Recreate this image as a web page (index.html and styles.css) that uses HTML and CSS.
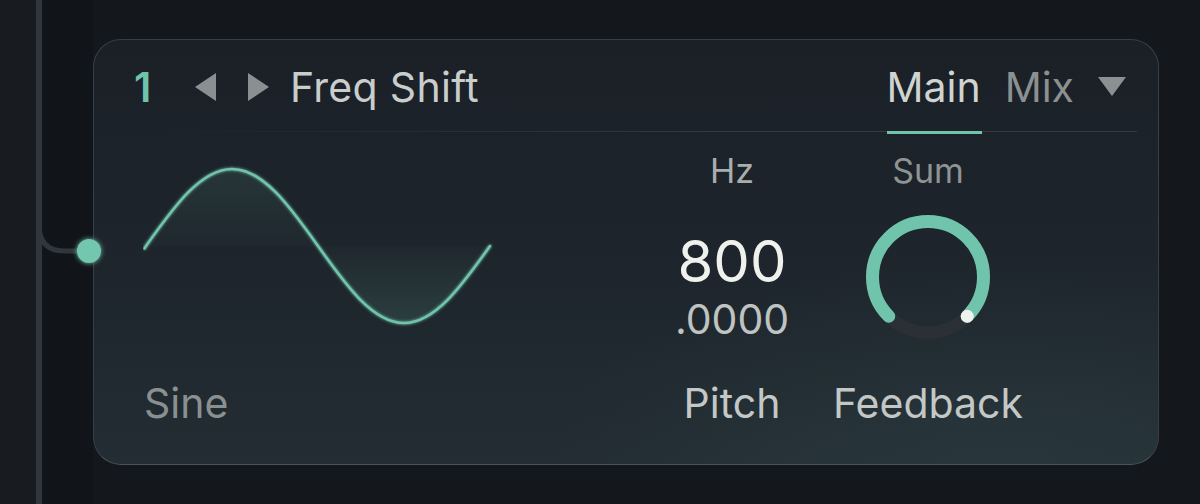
FILE: index.html
```html
<!DOCTYPE html>
<html lang="en">
<head>
<meta charset="utf-8">
<title>Freq Shift</title>
<link rel="stylesheet" href="styles.css">
</head>
<body>
<div class="page">
  <div class="rail">
    <svg class="rail-svg" width="93" height="504" viewBox="0 0 93 504">
      <defs>
        <filter id="glow" x="-100%" y="-100%" width="300%" height="300%">
          <feGaussianBlur stdDeviation="2.5" result="b"/>
          <feMerge><feMergeNode in="b"/><feMergeNode in="SourceGraphic"/></feMerge>
        </filter>
      </defs>
      <line x1="39" y1="0" x2="39" y2="504" stroke="#30363c" stroke-width="6"/>
      <path d="M39 224 Q39 251 64 251 L88 251" fill="none" stroke="#30363c" stroke-width="5"/>
      <circle cx="89" cy="251" r="12" fill="#72c7ae" filter="url(#glow)"/>
    </svg>
  </div>

  <div class="card">
    <div class="header">
      <div class="h-left">
        <span class="slot-num">1</span>
        <svg class="arrow arrow-prev" width="21" height="28" viewBox="0 0 21 28"><polygon points="21,0 21,28 0,14" fill="#8a8f91"/></svg>
        <svg class="arrow arrow-next" width="21" height="28" viewBox="0 0 21 28"><polygon points="0,0 0,28 21,14" fill="#8a8f91"/></svg>
        <span class="title">Freq Shift</span>
      </div>
      <div class="tabs">
        <span class="tab tab-active">Main</span>
        <span class="tab">Mix</span>
        <svg class="dropdown" width="28" height="19" viewBox="0 0 28 19"><polygon points="0,0 28,0 14,19" fill="#8b9092"/></svg>
      </div>
    </div>

    <div class="body">
      <div class="col wave-col">
        <svg class="wave" width="350" height="170" viewBox="0 0 350 170">
          <defs>
            <linearGradient id="fillTop" x1="0" y1="0" x2="0" y2="1">
              <stop offset="0" stop-color="#6fc4ab" stop-opacity="0.12"/>
              <stop offset="1" stop-color="#6fc4ab" stop-opacity="0.02"/>
            </linearGradient>
            <linearGradient id="fillBot" x1="0" y1="1" x2="0" y2="0">
              <stop offset="0" stop-color="#6fc4ab" stop-opacity="0.14"/>
              <stop offset="1" stop-color="#6fc4ab" stop-opacity="0.02"/>
            </linearGradient>
            <filter id="wglow" x="-10%" y="-10%" width="120%" height="120%">
              <feGaussianBlur stdDeviation="1.5" result="b"/>
              <feMerge><feMergeNode in="b"/><feMergeNode in="SourceGraphic"/></feMerge>
            </filter>
          </defs>
          <path d="M3 86 C31.06 46.54 57.96 9 89 9 C120.04 9 146.94 46.54 175 86 Z" fill="url(#fillTop)"/>
          <path d="M175 86 C203.06 125.46 229.96 163 261 163 C292.04 163 318.94 125.46 347 86 Z" fill="url(#fillBot)"/>
          <path d="M1.5 88.5 L3 86 C31.06 46.54 57.96 9 89 9 C120.04 9 146.94 46.54 175 86 C203.06 125.46 229.96 163 261 163 C292.04 163 318.94 125.46 347 86" fill="none" stroke="#6fc4ab" stroke-width="2.6" stroke-linecap="round" filter="url(#wglow)"/>
        </svg>
        <span class="name name-dim">Sine</span>
      </div>

      <div class="col pitch-col">
        <span class="unit">Hz</span>
        <div class="value">
          <span class="value-int">800</span>
          <span class="value-frac">.0000</span>
        </div>
        <span class="name">Pitch</span>
      </div>

      <div class="col fb-col">
        <span class="unit unit-dim">Sum</span>
        <svg class="knob" width="140" height="140" viewBox="0 0 140 140">
          <circle cx="70" cy="70" r="55.5" fill="none" stroke="#2a3035" stroke-width="13"/>
          <path d="M30.76 109.24 A55.5 55.5 0 1 1 109.24 109.24" fill="none" stroke="#6fc4ab" stroke-width="13" stroke-linecap="round"/>
          <circle cx="109.24" cy="109.24" r="6.5" fill="#eef1ec"/>
        </svg>
        <span class="name">Feedback</span>
      </div>
    </div>
  </div>
</div>
</body>
</html>
```

FILE: styles.css
```css
* { box-sizing: border-box; }

html, body {
  margin: 0;
  padding: 0;
  background: #14181d;
  font-family: Inter, "Noto Sans", "Liberation Sans", sans-serif;
}

.page {
  display: flex;
  width: 1200px;
  height: 504px;
  overflow: hidden;
  background: #14181d;
}

.rail {
  flex: none;
  width: 93px;
  height: 504px;
  z-index: 2;
  background: linear-gradient(to right, #181c21 0, #181c21 36px, #111418 36px, #111418 100%);
}

.rail-svg {
  display: block;
  overflow: visible;
}

.card {
  flex: none;
  width: 1066px;
  height: 426px;
  margin-top: 39px;
  border-radius: 28px;
  border: 1px solid #373f46;
  border-bottom-color: #49545b;
  background:
    radial-gradient(ellipse 60% 70% at 85% 100%, rgba(60, 90, 92, 0.22), rgba(60, 90, 92, 0) 70%),
    linear-gradient(to bottom, #1b2027 0%, #1d242b 45%, #232d33 100%);
  display: flex;
  flex-direction: column;
}

/* header */
.header {
  flex: none;
  height: 92px;
  margin: 0 21px 0 40px;
  padding-right: 11px;
  display: flex;
  justify-content: space-between;
  align-items: stretch;
  background: linear-gradient(to right, rgba(52, 60, 66, 0) 0%, rgba(52, 60, 66, 0.5) 35%, #343c42 60%, #343c42 100%) bottom / 100% 1px no-repeat;
  font-size: 41px;
  line-height: 40px;
}

.h-left {
  display: flex;
  align-items: center;
  padding-top: 2px;
}

.slot-num {
  color: #6fc4ab;
  font-weight: 600;
  width: 21px;
}

.arrow { display: block; }
.arrow-prev { margin-left: 40px; }
.arrow-next { margin-left: 32px; }

.title {
  margin-left: 21px;
  color: #c9cdcb;
  letter-spacing: 0.3px;
}

.tabs {
  display: flex;
  align-items: stretch;
}

.tab {
  display: flex;
  align-items: center;
  padding-top: 2px;
  color: #8b9091;
  position: relative;
}

.tab + .tab { margin-left: 24px; }

.tab-active { color: #d0d4d0; }

.tab-active::after {
  content: "";
  position: absolute;
  left: 1px;
  right: -1px;
  bottom: -2px;
  height: 3px;
  background: #6fc4ab;
}

.dropdown {
  display: block;
  align-self: center;
  margin-left: 24px;
  margin-top: 1px;
}

/* body */
.body {
  flex: 1;
  display: flex;
  padding: 19px 130px 39px 49px;
}

.col {
  display: grid;
  grid-template-rows: 40px 1fr 44px;
}

.wave-col { width: 350px; }

.wave {
  display: block;
  grid-row: 1 / 3;
  margin-top: 9px;
}

.pitch-col {
  width: 160px;
  margin-left: auto;
  justify-items: center;
}

.fb-col {
  width: 200px;
  margin-left: 16px;
  justify-items: center;
}

.unit {
  font-size: 34px;
  line-height: 40px;
  color: #a9aeac;
}

.unit-dim { color: #8e9493; }

.value {
  align-self: center;
  display: flex;
  flex-direction: column;
  align-items: center;
  gap: 7px;
}

.value-int {
  font-size: 58px;
  line-height: 58px;
  color: #eff1ed;
}

.value-frac {
  font-size: 41px;
  line-height: 44px;
  color: #bfc3c1;
}

.knob {
  display: block;
  align-self: start;
  margin-top: 16px;
}

.name {
  grid-row: 3;
  font-size: 41px;
  line-height: 44px;
  color: #c3c8c6;
}

.name-dim {
  color: #8a9090;
  margin-left: 1px;
}
```
